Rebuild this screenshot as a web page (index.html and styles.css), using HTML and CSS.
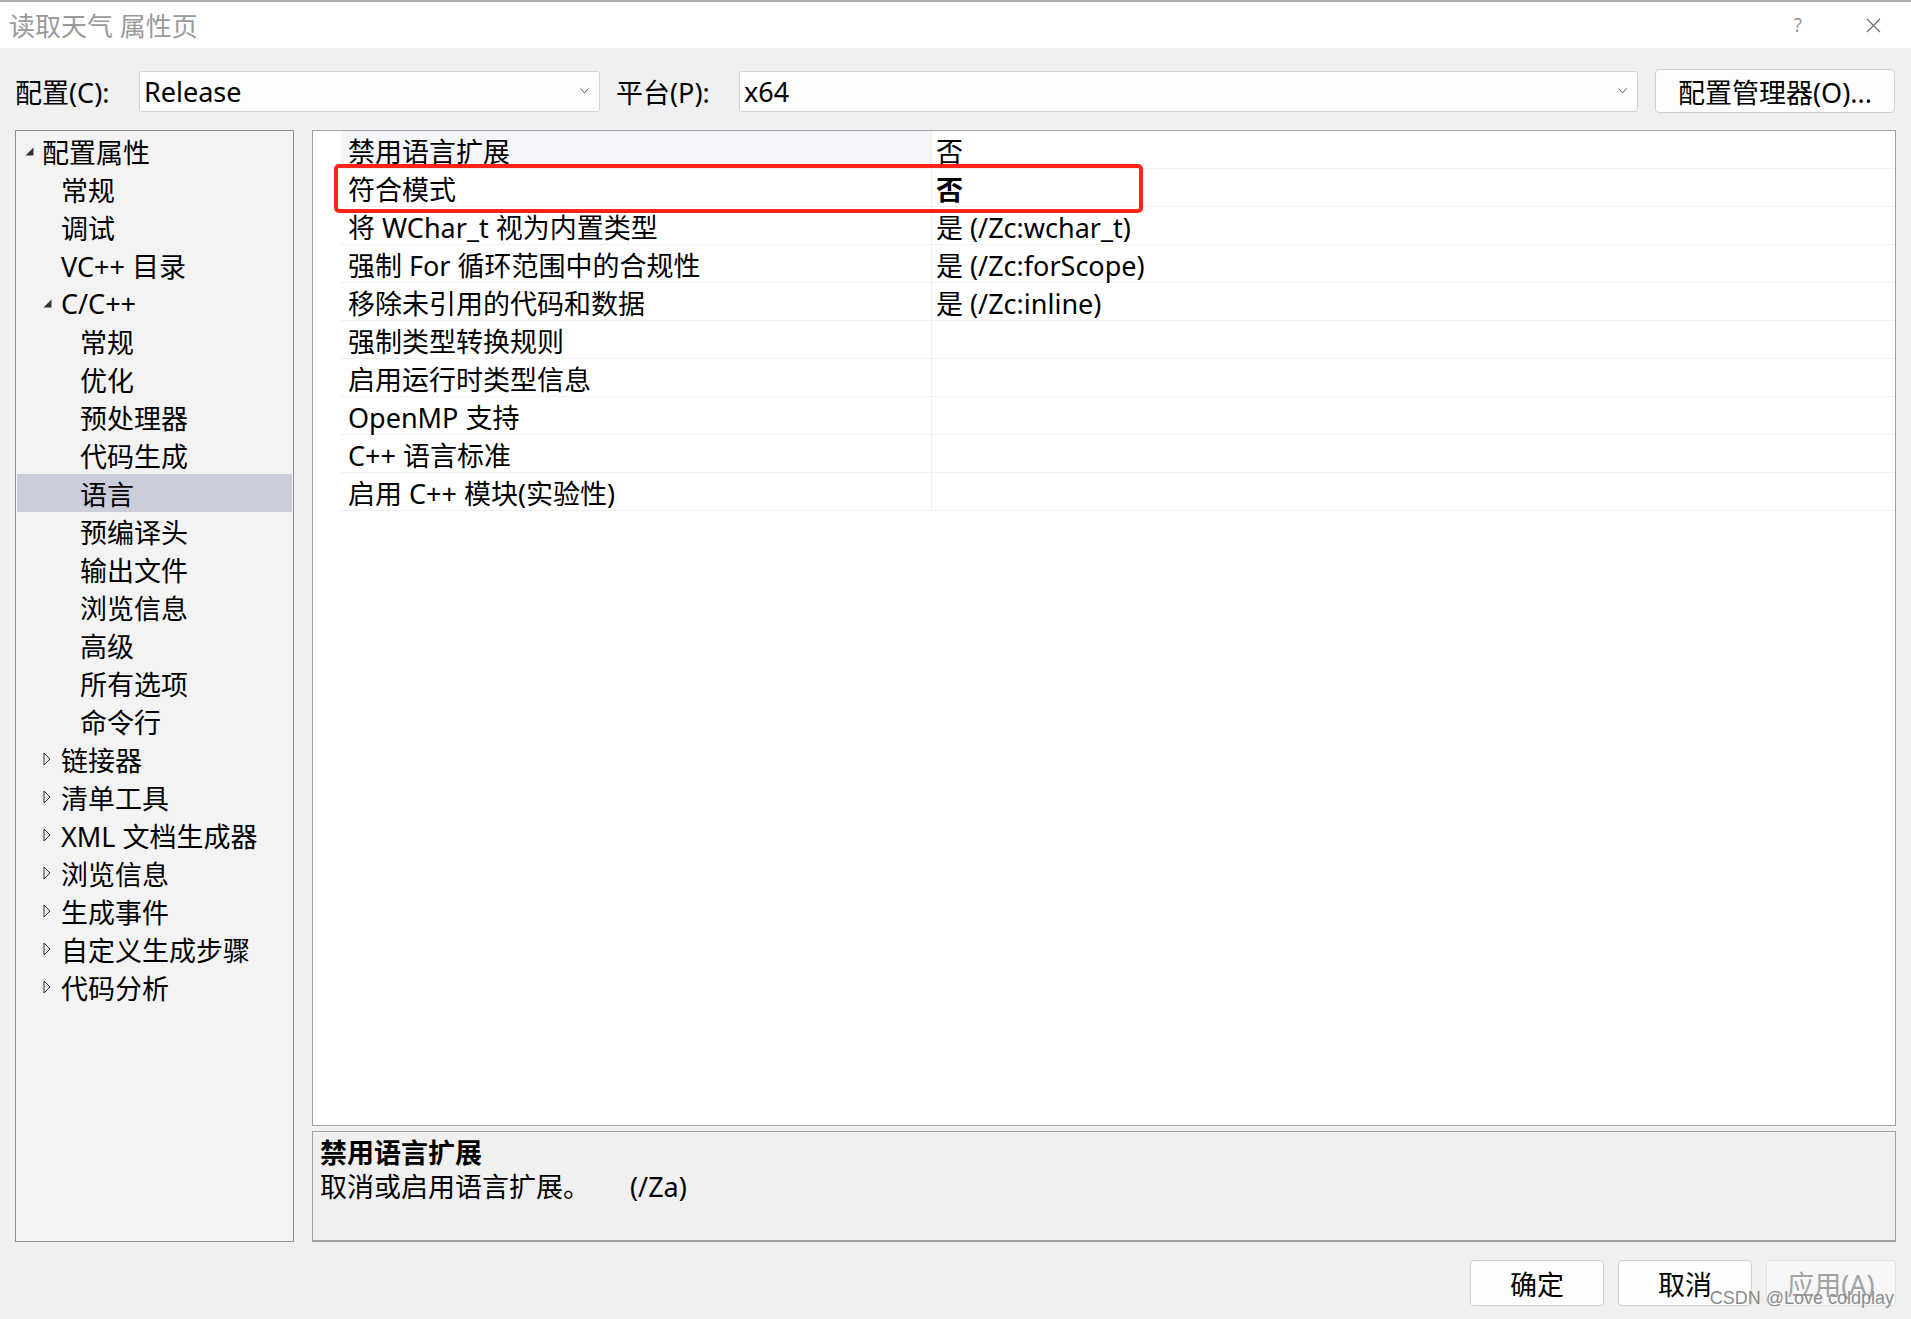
FILE: index.html
```html
<!DOCTYPE html>
<html lang="zh-CN">
<head>
    <meta charset="UTF-8">
    <meta name="viewport" content="width=device-width, initial-scale=1.0">

    <link rel="stylesheet" href="styles.css">

    <title>读取天气 属性页</title>
</head>
<body>

    <div class="janela">

        <div class="titulo">
            <span class="titulo-texto">读取天气 属性页</span>
            <span class="ajuda">?</span>
            <span class="fechar">
                <svg width="15" height="15" viewBox="0 0 15 15"><path d="M1 1 L14 14 M14 1 L1 14" stroke="#6e6e6e" stroke-width="1.2" fill="none"/></svg>
            </span>
        </div>

        <div class="barra">
            <span class="rotulo">配置(C):</span>
            <div class="combo combo-config">
                <span>Release</span>
                <svg class="chev" width="9" height="6" viewBox="0 0 9 6"><path d="M0.5 0.5 L4.5 5 L8.5 0.5" fill="none" stroke="#5a5a5a"/></svg>
            </div>
            <span class="rotulo rotulo-plat">平台(P):</span>
            <div class="combo combo-plat">
                <span>x64</span>
                <svg class="chev" width="9" height="6" viewBox="0 0 9 6"><path d="M0.5 0.5 L4.5 5 L8.5 0.5" fill="none" stroke="#5a5a5a"/></svg>
            </div>
            <button class="botao botao-gerente">配置管理器(O)...</button>
        </div>

        <div class="corpo">

            <ul class="arvore">
                <li class="n0"><span class="seta"><svg width="9" height="9" viewBox="0 0 9 9"><path d="M8.5 0.5 V8.5 H0.5 Z" fill="#333"/></svg></span>配置属性</li>
                <li class="n1"><span class="seta"></span>常规</li>
                <li class="n1"><span class="seta"></span>调试</li>
                <li class="n1"><span class="seta"></span>VC++ 目录</li>
                <li class="n1"><span class="seta"><svg width="9" height="9" viewBox="0 0 9 9"><path d="M8.5 0.5 V8.5 H0.5 Z" fill="#333"/></svg></span>C/C++</li>
                <li class="n2"><span class="seta"></span>常规</li>
                <li class="n2"><span class="seta"></span>优化</li>
                <li class="n2"><span class="seta"></span>预处理器</li>
                <li class="n2"><span class="seta"></span>代码生成</li>
                <li class="n2 selecionado"><span class="seta"></span>语言</li>
                <li class="n2"><span class="seta"></span>预编译头</li>
                <li class="n2"><span class="seta"></span>输出文件</li>
                <li class="n2"><span class="seta"></span>浏览信息</li>
                <li class="n2"><span class="seta"></span>高级</li>
                <li class="n2"><span class="seta"></span>所有选项</li>
                <li class="n2"><span class="seta"></span>命令行</li>
                <li class="n1"><span class="seta"><svg width="8" height="14" viewBox="0 0 8 14"><path d="M1 1 L7 7 L1 13 Z" fill="none" stroke="#333"/></svg></span>链接器</li>
                <li class="n1"><span class="seta"><svg width="8" height="14" viewBox="0 0 8 14"><path d="M1 1 L7 7 L1 13 Z" fill="none" stroke="#333"/></svg></span>清单工具</li>
                <li class="n1"><span class="seta"><svg width="8" height="14" viewBox="0 0 8 14"><path d="M1 1 L7 7 L1 13 Z" fill="none" stroke="#333"/></svg></span>XML 文档生成器</li>
                <li class="n1"><span class="seta"><svg width="8" height="14" viewBox="0 0 8 14"><path d="M1 1 L7 7 L1 13 Z" fill="none" stroke="#333"/></svg></span>浏览信息</li>
                <li class="n1"><span class="seta"><svg width="8" height="14" viewBox="0 0 8 14"><path d="M1 1 L7 7 L1 13 Z" fill="none" stroke="#333"/></svg></span>生成事件</li>
                <li class="n1"><span class="seta"><svg width="8" height="14" viewBox="0 0 8 14"><path d="M1 1 L7 7 L1 13 Z" fill="none" stroke="#333"/></svg></span>自定义生成步骤</li>
                <li class="n1"><span class="seta"><svg width="8" height="14" viewBox="0 0 8 14"><path d="M1 1 L7 7 L1 13 Z" fill="none" stroke="#333"/></svg></span>代码分析</li>
            </ul>

            <div class="direita">
                <div class="grade">
                    <div class="linha ativa"><div class="nome">禁用语言扩展</div><div class="valor">否</div></div>
                    <div class="linha"><div class="nome">符合模式</div><div class="valor negrito">否</div></div>
                    <div class="linha"><div class="nome">将 WChar_t 视为内置类型</div><div class="valor">是 (/Zc:wchar_t)</div></div>
                    <div class="linha"><div class="nome">强制 For 循环范围中的合规性</div><div class="valor">是 (/Zc:forScope)</div></div>
                    <div class="linha"><div class="nome">移除未引用的代码和数据</div><div class="valor">是 (/Zc:inline)</div></div>
                    <div class="linha"><div class="nome">强制类型转换规则</div><div class="valor"></div></div>
                    <div class="linha"><div class="nome">启用运行时类型信息</div><div class="valor"></div></div>
                    <div class="linha"><div class="nome">OpenMP 支持</div><div class="valor"></div></div>
                    <div class="linha"><div class="nome">C++ 语言标准</div><div class="valor"></div></div>
                    <div class="linha"><div class="nome">启用 C++ 模块(实验性)</div><div class="valor"></div></div>

                    <!-- marcação vermelha por cima da segunda linha -->
                    <div class="destaque"></div>
                </div>

                <div class="descricao">
                    <div class="desc-titulo">禁用语言扩展</div>
                    <div class="desc-texto">取消或启用语言扩展。<span class="desc-opcao">(/Za)</span></div>
                </div>
            </div>
        </div>

        <div class="rodape">
            <button class="botao">确定</button>
            <button class="botao">取消</button>
            <button class="botao desativado">应用(A)</button>
        </div>

        <div class="marca">CSDN @Love coldplay</div>
    </div>

</body>
</html>
```

FILE: styles.css
```css
* {
    box-sizing: border-box;
}
body {
    margin: 0;
    background-color: #f0f0f0;
    color: #000;
    font-family: "Noto Sans", "Noto Sans CJK SC", sans-serif;
    font-size: 27px;
}

.janela {
    position: relative;
    width: 1911px;
    height: 1319px;
    overflow: hidden;
}

/* barra de título */
.titulo {
    display: flex;
    align-items: center;
    height: 48px;
    padding-left: 9px;
    background-color: #fff;
    border-top: 2px solid #ababab;
}
.titulo-texto {
    flex: 1;
    color: #9a9a9a;
    font-size: 26px;
}
.ajuda {
    color: #9a9a9a;
    font-size: 19px;
    margin-right: 64px;
}
.fechar {
    display: flex;
    margin-right: 30px;
}

/* configuração / plataforma */
.barra {
    display: flex;
    align-items: center;
    height: 82px;
    padding: 4px 16px 0 15px;
}
.rotulo {
    width: 124px;
    flex: none;
}
.rotulo-plat {
    width: 123px;
    margin-left: 16px;
}
.combo {
    display: flex;
    align-items: center;
    justify-content: space-between;
    height: 41px;
    padding: 0 10px 0 4px;
    background-color: #fdfdfd;
    border: 1px solid #d3d3d3;
    border-radius: 3px;
}
.combo-config {
    width: 461px;
}
.combo-plat {
    width: 899px;
}
.botao {
    height: 46px;
    padding: 0;
    background-color: #fdfdfd;
    border: 1px solid #d0d0d0;
    border-radius: 4px;
    font-family: inherit;
    font-size: 27px;
    color: #000;
}
.botao-gerente {
    width: 240px;
    height: 44px;
    margin-left: 17px;
}

/* área principal */
.corpo {
    display: flex;
    gap: 18px;
    height: 1112px;
    padding: 0 15px;
}

.arvore {
    width: 279px;
    flex: none;
    margin: 0;
    padding: 1px;
    list-style: none;
    background-color: #f3f3f3;
    border: 1px solid #8c8f99;
}
.arvore li {
    display: flex;
    align-items: center;
    height: 38px;
    white-space: nowrap;
}
.seta {
    display: flex;
    align-items: center;
    width: 18px;
    flex: none;
}
.n0 {
    padding-left: 7px;
}
.n0 .seta {
    padding-left: 1px;
}
.n1 {
    padding-left: 26px;
}
.n2 {
    padding-left: 45px;
}
.selecionado {
    background-color: #cbcdda;
}

.direita {
    display: flex;
    flex-direction: column;
    gap: 5px;
    flex: 1;
}

/* grade de propriedades */
.grade {
    position: relative;
    height: 996px;
    padding-left: 28px;
    background-color: #fff;
    border: 1px solid #a0a0a0;
}
.linha {
    display: flex;
    height: 38px;
    border-bottom: 1px solid #f0f0f0;
    line-height: 37px;
    white-space: nowrap;
}
.nome {
    width: 591px;
    flex: none;
    padding: 2px 0 0 7px;
    border-right: 1px solid #eceef2;
}
.ativa .nome {
    background-color: #f4f6fa;
}
.valor {
    flex: 1;
    padding: 2px 0 0 4px;
}
.negrito {
    font-weight: 700;
}
.destaque {
    position: absolute;
    left: 21px;
    top: 33px;
    width: 809px;
    height: 49px;
    border: 4px solid #ff2318;
    border-radius: 5px;
}

.descricao {
    height: 111px;
    padding: 4px 7px;
    border: 1px solid #a0a0a0;
    border-bottom-width: 2px;
    line-height: 34px;
}
.desc-titulo {
    font-weight: 700;
}
.desc-opcao {
    margin-left: 40px;
}

/* botões de baixo */
.rodape {
    display: flex;
    justify-content: flex-end;
    gap: 14px;
    padding: 18px 15px 0 0;
}
.rodape .botao {
    width: 134px;
}
.rodape .desativado {
    width: 130px;
    color: #a3a3a3;
    border-color: #e2e2e2;
    background-color: #f7f7f7;
}

.marca {
    position: absolute;
    right: 17px;
    top: 1288px;
    color: #8c8c8c;
    font-family: "Liberation Sans", Arial, sans-serif;
    font-size: 18px;
}
```
